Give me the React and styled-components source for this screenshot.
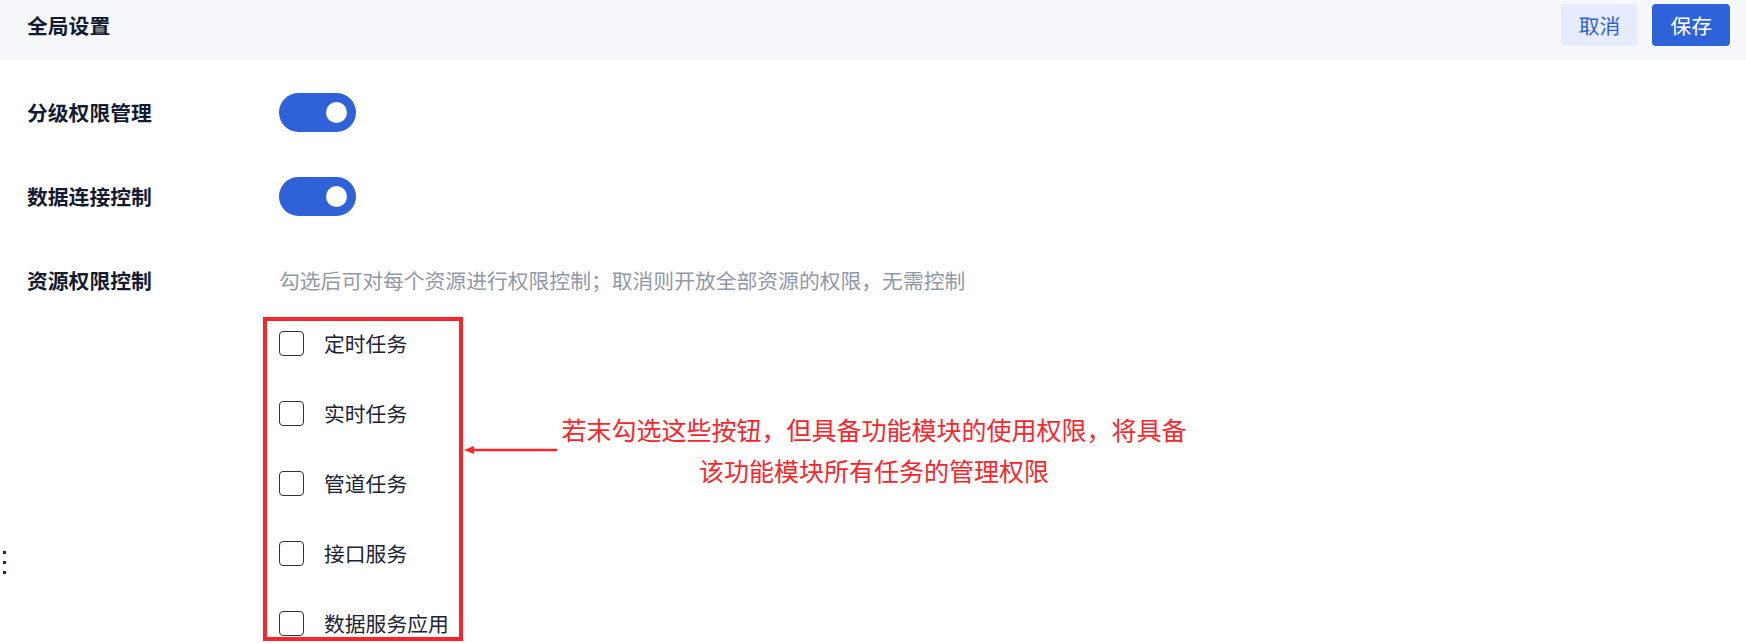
import React from 'react';
import styled, { createGlobalStyle } from 'styled-components';

const GlobalStyle = createGlobalStyle`
  html, body { margin: 0; padding: 0; background: #ffffff; }
  body { font-family: "Noto Sans CJK SC", "Noto Sans", sans-serif; }
  * { box-sizing: border-box; }
`;

const Page = styled.div`
  position: relative;
  width: 1746px;
  height: 643px;
  overflow: hidden;
  background: #ffffff;
`;

const Header = styled.header`
  height: 60px;
  background: #f7f8fc;
  display: flex;
  align-items: center;
  justify-content: space-between;
  padding: 4px 16px 14px 27px;
`;

const Title = styled.h1`
  margin: 0;
  font-size: 20.8px;
  font-weight: 700;
  line-height: 1;
  color: #131b31;
`;

const Actions = styled.div`
  display: flex;
  gap: 14px;
`;

const Button = styled.button`
  height: 42px;
  padding: 0 18px;
  border: none;
  border-radius: 4px;
  font-family: inherit;
  font-size: 20.8px;
  line-height: 1;
  cursor: pointer;
  background: ${(p) => (p.$primary ? '#2d62d9' : '#e4ecfd')};
  color: ${(p) => (p.$primary ? '#ffffff' : '#3160d8')};
`;

const Main = styled.main`
  padding: 33px 0 0 27px;
`;

const Settings = styled.div`
  display: flex;
  flex-direction: column;
  gap: 45px;
`;

const SettingRow = styled.div`
  display: flex;
  align-items: center;
  height: 39px;
`;

const Label = styled.div`
  width: 252px;
  flex: none;
  font-size: 20.8px;
  font-weight: 700;
  line-height: 1;
  color: #131b31;
`;

const Hint = styled.div`
  font-size: 20.8px;
  line-height: 1;
  color: #9198a8;
`;

const Toggle = styled.span`
  width: 77px;
  height: 39px;
  border-radius: 20px;
  background: ${(p) => (p.$on ? '#2f62d8' : '#c9ceda')};
  display: flex;
  align-items: center;
  justify-content: ${(p) => (p.$on ? 'flex-end' : 'flex-start')};
  padding: 0 9px;
`;

const Knob = styled.span`
  width: 21px;
  height: 21px;
  border-radius: 50%;
  background: #ffffff;
`;

const Resources = styled.div`
  display: flex;
  align-items: flex-start;
  margin-top: 17px;
  padding-left: 236px;
`;

const CheckList = styled.div`
  width: 200px;
  border: 4px solid #f8262c;
  padding: 10px 0 1px 12px;
  display: flex;
  flex-direction: column;
  gap: 45px;
`;

const CheckItem = styled.label`
  display: flex;
  align-items: center;
  gap: 20px;
  height: 25px;
  font-size: 20.8px;
  line-height: 1;
  color: #1b2335;
  white-space: nowrap;
`;

const Box = styled.span`
  width: 25px;
  height: 25px;
  flex: none;
  border: 1.5px solid #2c3344;
  border-radius: 4px;
  background: #ffffff;
`;

const Annotation = styled.div`
  display: flex;
  align-items: center;
  margin-top: 92px;
  margin-left: 1px;
  gap: 4px;
`;

const Note = styled.div`
  width: 626px;
  text-align: center;
  font-size: 25px;
  line-height: 41px;
  color: #f9262e;
`;

const Handle = styled.div`
  position: absolute;
  left: 3px;
  top: 551px;
  display: flex;
  flex-direction: column;
  gap: 7px;
`;

const Dot = styled.span`
  width: 3px;
  height: 3px;
  background: #1e2a44;
`;

const Arrow = () => (
  <svg width="93" height="12" viewBox="0 0 93 12">
    <line x1="6" y1="6" x2="93" y2="6" stroke="#f9262e" strokeWidth="2.4" />
    <polygon points="0,6 10,2 10,10" fill="#f9262e" />
  </svg>
);

const items = ['定时任务', '实时任务', '管道任务', '接口服务', '数据服务应用'];

export default function App() {
  return (
    <>
      <GlobalStyle />
      <Page>
        <Header>
          <Title>全局设置</Title>
          <Actions>
            <Button>取消</Button>
            <Button $primary>保存</Button>
          </Actions>
        </Header>
        <Main>
          <Settings>
            <SettingRow>
              <Label>分级权限管理</Label>
              <Toggle $on><Knob /></Toggle>
            </SettingRow>
            <SettingRow>
              <Label>数据连接控制</Label>
              <Toggle $on><Knob /></Toggle>
            </SettingRow>
            <SettingRow>
              <Label>资源权限控制</Label>
              <Hint>勾选后可对每个资源进行权限控制；取消则开放全部资源的权限，无需控制</Hint>
            </SettingRow>
          </Settings>
          <Resources>
            <CheckList>
              {items.map((t) => (
                <CheckItem key={t}>
                  <Box />
                  {t}
                </CheckItem>
              ))}
            </CheckList>
            <Annotation>
              <Arrow />
              <Note>
                若末勾选这些按钮，但具备功能模块的使用权限，将具备
                <br />
                该功能模块所有任务的管理权限
              </Note>
            </Annotation>
          </Resources>
        </Main>
        <Handle>
          <Dot />
          <Dot />
          <Dot />
        </Handle>
      </Page>
    </>
  );
}
